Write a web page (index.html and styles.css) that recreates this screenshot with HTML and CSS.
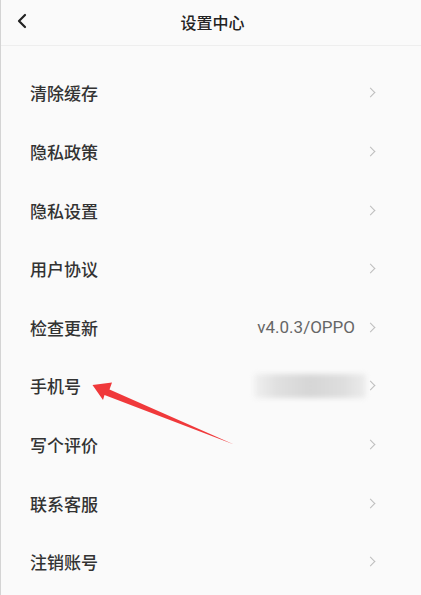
FILE: index.html
```html
<!DOCTYPE html>
<html lang="zh">
<head>
<meta charset="utf-8">
<title>设置中心</title>
<link rel="stylesheet" href="styles.css">
</head>
<body>
<div class="page">
  <header class="header">
    <svg class="back" width="12" height="16" viewBox="0 0 12 16"><path d="M9 2 L3 8 L9 14" fill="none" stroke="#222" stroke-width="2.2" stroke-linecap="round" stroke-linejoin="round"/></svg>
    <h1 class="title">设置中心</h1>
  </header>
  <ul class="list">
    <li class="row"><span class="label">清除缓存</span><span class="chev"></span></li>
    <li class="row"><span class="label">隐私政策</span><span class="chev"></span></li>
    <li class="row"><span class="label">隐私设置</span><span class="chev"></span></li>
    <li class="row"><span class="label">用户协议</span><span class="chev"></span></li>
    <li class="row"><span class="label">检查更新</span><span class="value">v4.0.3/OPPO</span><span class="chev"></span></li>
    <li class="row"><span class="label">手机号</span><span class="blurred"></span><span class="chev"></span></li>
    <li class="row"><span class="label">写个评价</span><span class="chev"></span></li>
    <li class="row"><span class="label">联系客服</span><span class="chev"></span></li>
    <li class="row"><span class="label">注销账号</span><span class="chev"></span></li>
  </ul>
  <svg class="arrow" width="421" height="595" viewBox="0 0 421 595">
    <polygon points="92.5,385 112,382.5 109.5,389.5 234,444.5 104.5,395 103,400" fill="#f0393b"/>
  </svg>
</div>
</body>
</html>
```

FILE: styles.css
```css
html, body {
  margin: 0;
  padding: 0;
  background: #fafafa;
}
.page {
  position: relative;
  width: 421px;
  height: 595px;
  overflow: hidden;
  border-left: 1px solid #d4d4d4;
  box-sizing: border-box;
  font-family: "Noto Sans CJK SC", "Noto Sans", sans-serif;
}
.header {
  position: relative;
  height: 45px;
  border-bottom: 1px solid #eeeeee;
  display: flex;
  align-items: center;
  justify-content: center;
}
.back {
  position: absolute;
  left: 15px;
  top: 13px;
}
.title {
  margin: 0;
  font-size: 16px;
  font-weight: 500;
  color: #222;
  margin-left: 3px;
  margin-top: -2px;
}
.list {
  list-style: none;
  margin: 0;
  padding: 0;
  margin-top: 17.7px;
}
.row {
  height: 58.6px;
  display: flex;
  align-items: center;
  padding: 0 45px 0 29px;
}
.label {
  font-size: 17px;
  font-weight: 500;
  color: #333;
  flex: 1;
}
.value {
  font-family: "Roboto", "Noto Sans", sans-serif;
  font-size: 17px;
  color: #666;
  margin-right: 12px;
}
.blurred {
  width: 112px;
  height: 24px;
  margin-right: 1px;
  background: linear-gradient(90deg, #f0f0f0 0%, #e0e0e0 20%, #d6d6d6 50%, #dedede 80%, #ececec 100%);
  filter: blur(2.5px);
  border-radius: 3px;
}
.chev {
  width: 6px;
  height: 6px;
  border-top: 1.6px solid #bdbdbd;
  border-right: 1.6px solid #bdbdbd;
  transform: rotate(45deg);
  margin-right: 2px;
}
.arrow {
  position: absolute;
  left: -1px;
  top: 0;
  pointer-events: none;
}
```
